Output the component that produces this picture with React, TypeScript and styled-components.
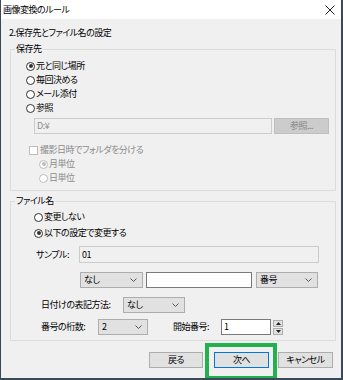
import React from "react";
import styled, { createGlobalStyle } from "styled-components";

const GlobalStyle = createGlobalStyle`
  html, body {
    margin: 0;
    padding: 0;
    background: #ffffff;
  }
  body {
    font-family: "Noto Sans CJK JP", "Noto Sans", sans-serif;
    font-size: 9px;
    font-feature-settings: "palt";
    letter-spacing: -0.5px;
    color: #000;
  }
  * {
    box-sizing: border-box;
  }
`;

const Window = styled.div`
  position: relative;
  width: 343px;
  height: 380px;
  display: flex;
  flex-direction: column;
  background: #f0f0f0;
  border-left: 1px solid #3a4a5a;
  border-right: 2px solid #3a4a5a;
  border-bottom: 2px solid #3a4a5a;
  overflow: hidden;
`;

const TitleBar = styled.div`
  height: 19px;
  flex-shrink: 0;
  display: flex;
  align-items: center;
  justify-content: space-between;
  padding: 0 6px 0 2px;
  background: #ffffff;
`;

const Title = styled.span`
  line-height: 12px;
`;

const Body = styled.div`
  display: flex;
  flex-direction: column;
  padding: 7px 5px 0 8px;
`;

const Heading = styled.div`
  height: 14px;
  line-height: 14px;
`;

const Group = styled.fieldset<{ $gap?: number }>`
  margin: ${(p) => p.$gap ?? 3}px 0 0 1px;
  padding: 0 6px 5px 0;
  border: 1px solid #dcdcdc;
  min-width: 0;
  display: flex;
  flex-direction: column;
`;

const Legend = styled.legend`
  margin-left: 4px;
  padding: 0 1px;
  line-height: 12px;
  height: 12px;
`;

const Row = styled.div<{ $indent: number; $top?: number; $h?: number }>`
  display: flex;
  align-items: center;
  margin-left: ${(p) => p.$indent}px;
  margin-top: ${(p) => p.$top ?? 0}px;
  height: ${(p) => p.$h ?? 14}px;
  flex-shrink: 0;
`;

const Option = styled.label<{ $disabled?: boolean }>`
  display: flex;
  align-items: center;
  gap: 1px;
  line-height: 12px;
  color: ${(p) => (p.$disabled ? "#8c8c8c" : "#000")};
`;

const Circle = styled.span<{ $checked?: boolean; $disabled?: boolean }>`
  position: relative;
  width: 9px;
  height: 9px;
  border-radius: 50%;
  border: 1px solid ${(p) => (p.$disabled ? "#bcbcbc" : "#333333")};
  background: #ffffff;
  flex-shrink: 0;
  &::after {
    content: "";
    display: ${(p) => (p.$checked ? "block" : "none")};
    position: absolute;
    left: 1.5px;
    top: 1.5px;
    width: 4px;
    height: 4px;
    border-radius: 50%;
    background: ${(p) => (p.$disabled ? "#bcbcbc" : "#333333")};
  }
`;

const Box = styled.span`
  width: 9px;
  height: 9px;
  border: 1px solid #bcbcbc;
  background: #ffffff;
  margin-right: 1px;
  flex-shrink: 0;
`;

const Field = styled.div<{ $w?: number; $kind: "edit" | "disabled" | "readonly" }>`
  height: 100%;
  width: ${(p) => (p.$w ? `${p.$w}px` : "auto")};
  flex: ${(p) => (p.$w ? "none" : "1")};
  display: flex;
  align-items: center;
  padding-left: 2px;
  line-height: 12px;
  background: ${(p) => (p.$kind === "edit" ? "#ffffff" : "#f0f0f0")};
  border: 1px solid ${(p) => (p.$kind === "edit" ? "#7a7a7a" : "#cccccc")};
  color: ${(p) => (p.$kind === "disabled" ? "#8c8c8c" : "#000")};
`;

const Button = styled.button<{ $w: number; $default?: boolean }>`
  width: ${(p) => p.$w}px;
  height: 16px;
  padding: 0;
  font: inherit;
  letter-spacing: inherit;
  line-height: 12px;
  color: #000;
  background: #e1e1e1;
  border: 1px solid ${(p) => (p.$default ? "#0078d7" : "#adadad")};
  &:disabled {
    background: #cccccc;
    border-color: #bfbfbf;
    color: #838383;
  }
`;

const SelectBox = styled.div<{ $w: number }>`
  width: ${(p) => p.$w}px;
  height: 100%;
  flex-shrink: 0;
  display: flex;
  align-items: center;
  justify-content: space-between;
  padding: 0 5px 0 3px;
  line-height: 12px;
  background: #e1e1e1;
  border: 1px solid #adadad;
`;

const Label = styled.span<{ $w: number }>`
  width: ${(p) => p.$w}px;
  flex-shrink: 0;
  line-height: 12px;
`;

const Spin = styled.div`
  width: 10px;
  height: 15px;
  margin-left: 2px;
  display: flex;
  flex-direction: column;
  gap: 1px;
`;

const SpinPart = styled.div`
  flex: 1;
  display: flex;
  align-items: center;
  justify-content: center;
  background: #e1e1e1;
  border: 1px solid #adadad;
`;

const Footer = styled.div`
  display: flex;
  justify-content: flex-end;
  margin-top: 11px;
  margin-right: 3px;
`;

const NextWrap = styled.div`
  position: relative;
  margin: 0 9px 0 11px;
  display: flex;
`;

const Highlight = styled.div`
  position: absolute;
  left: -9px;
  right: -8px;
  top: -9px;
  bottom: -12px;
  border: 4px solid #22b14c;
  pointer-events: none;
`;

const Chevron = () => (
  <svg width="7" height="4" viewBox="0 0 7 4">
    <path d="M0.5 0.5 L3.5 3.5 L6.5 0.5" fill="none" stroke="#555" strokeWidth="1" />
  </svg>
);

const Select = ({ w, value }: { w: number; value: string }) => (
  <SelectBox $w={w}>
    <span>{value}</span>
    <Chevron />
  </SelectBox>
);

const Radio = ({
  label,
  checked,
  disabled,
}: {
  label: string;
  checked?: boolean;
  disabled?: boolean;
}) => (
  <Option $disabled={disabled}>
    <Circle $checked={checked} $disabled={disabled} />
    {label}
  </Option>
);

export default function App() {
  return (
    <>
      <GlobalStyle />
      <Window>
        <TitleBar>
          <Title>画像変換のルール</Title>
          <svg width="10" height="10" viewBox="0 0 10 10">
            <path d="M0.5 0.5 L9.5 9.5 M9.5 0.5 L0.5 9.5" stroke="#222" strokeWidth="1" />
          </svg>
        </TitleBar>
        <Body>
          <Heading>2.保存先とファイル名の設定</Heading>

          <Group>
            <Legend>保存先</Legend>
            <Row $indent={15} $top={4}>
              <Radio label="元と同じ場所" checked />
            </Row>
            <Row $indent={15}>
              <Radio label="毎回決める" />
            </Row>
            <Row $indent={15}>
              <Radio label="メール添付" />
            </Row>
            <Row $indent={15}>
              <Radio label="参照" />
            </Row>
            <Row $indent={23} $top={3} $h={16}>
              <Field $kind="disabled">D:¥</Field>
              <Button $w={55} disabled style={{ marginLeft: 2 }}>
                参照...
              </Button>
            </Row>
            <Row $indent={18} $top={9}>
              <Option $disabled>
                <Box />
                撮影日時でフォルダを分ける
              </Option>
            </Row>
            <Row $indent={28}>
              <Radio label="月単位" checked disabled />
            </Row>
            <Row $indent={28}>
              <Radio label="日単位" disabled />
            </Row>
          </Group>

          <Group $gap={4}>
            <Legend>ファイル名</Legend>
            <Row $indent={23} $top={2} $h={16}>
              <Radio label="変更しない" />
            </Row>
            <Row $indent={23} $h={16}>
              <Radio label="以下の設定で変更する" checked />
            </Row>
            <Row $indent={25} $top={5} $h={17}>
              <Label $w={43}>サンプル:</Label>
              <Field $kind="readonly" $w={240}>
                01
              </Field>
            </Row>
            <Row $indent={69} $top={9} $h={16}>
              <Select w={63} value="なし" />
              <Field $kind="edit" $w={106} style={{ margin: "0 4px 0 3px" }} />
              <Select w={62} value="番号" />
            </Row>
            <Row $indent={30} $top={9} $h={16}>
              <Label $w={82}>日付けの表記方法:</Label>
              <Select w={62} value="なし" />
            </Row>
            <Row $indent={30} $top={6} $h={16}>
              <Label $w={57}>番号の桁数:</Label>
              <Select w={50} value="2" />
              <Label $w={48} style={{ marginLeft: 25 }}>
                開始番号:
              </Label>
              <Field $kind="edit" $w={50}>
                1
              </Field>
              <Spin>
                <SpinPart>
                  <svg width="5" height="3" viewBox="0 0 5 3">
                    <path d="M0 3 L2.5 0 L5 3 Z" fill="#222" />
                  </svg>
                </SpinPart>
                <SpinPart>
                  <svg width="5" height="3" viewBox="0 0 5 3">
                    <path d="M0 0 L2.5 3 L5 0 Z" fill="#222" />
                  </svg>
                </SpinPart>
              </Spin>
            </Row>
          </Group>

          <Footer>
            <Button $w={54}>戻る</Button>
            <NextWrap>
              <Button $w={55} $default>
                次へ
              </Button>
              <Highlight />
            </NextWrap>
            <Button $w={55}>キャンセル</Button>
          </Footer>
        </Body>
      </Window>
    </>
  );
}
